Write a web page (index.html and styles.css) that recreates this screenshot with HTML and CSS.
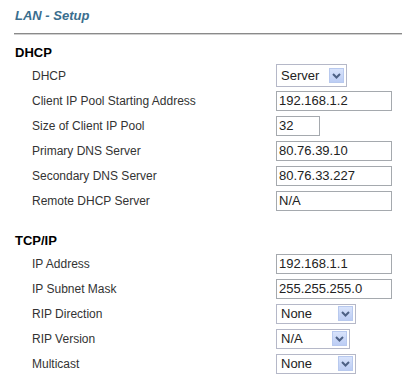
FILE: index.html
```html
<!DOCTYPE html>
<html>
<head>
<meta charset="utf-8">
<link rel="stylesheet" href="styles.css">
</head>
<body>
<div class="page">
  <h1 class="title">LAN - Setup</h1>
  <div class="rule"></div>

  <h2 class="section">DHCP</h2>
  <div class="form">
    <div class="label">DHCP</div>
    <div class="field"><div class="select sel-server"><span class="val">Server</span><span class="arrow"><svg width="9" height="6" viewBox="0 0 9 6"><path d="M1 1 L4.5 4.5 L8 1" fill="none" stroke="#4d6185" stroke-width="2"/></svg></span></div></div>

    <div class="label">Client IP Pool Starting Address</div>
    <div class="field"><div class="input">192.168.1.2</div></div>

    <div class="label">Size of Client IP Pool</div>
    <div class="field"><div class="input short">32</div></div>

    <div class="label">Primary DNS Server</div>
    <div class="field"><div class="input">80.76.39.10</div></div>

    <div class="label">Secondary DNS Server</div>
    <div class="field"><div class="input">80.76.33.227</div></div>

    <div class="label">Remote DHCP Server</div>
    <div class="field"><div class="input">N/A</div></div>
  </div>

  <h2 class="section tcp">TCP/IP</h2>
  <div class="form">
    <div class="label">IP Address</div>
    <div class="field"><div class="input">192.168.1.1</div></div>

    <div class="label">IP Subnet Mask</div>
    <div class="field"><div class="input">255.255.255.0</div></div>

    <div class="label">RIP Direction</div>
    <div class="field"><div class="select sel-wide"><span class="val">None</span><span class="arrow"><svg width="9" height="6" viewBox="0 0 9 6"><path d="M1 1 L4.5 4.5 L8 1" fill="none" stroke="#4d6185" stroke-width="2"/></svg></span></div></div>

    <div class="label">RIP Version</div>
    <div class="field"><div class="select sel-mid"><span class="val">N/A</span><span class="arrow"><svg width="9" height="6" viewBox="0 0 9 6"><path d="M1 1 L4.5 4.5 L8 1" fill="none" stroke="#4d6185" stroke-width="2"/></svg></span></div></div>

    <div class="label">Multicast</div>
    <div class="field"><div class="select sel-wide"><span class="val">None</span><span class="arrow"><svg width="9" height="6" viewBox="0 0 9 6"><path d="M1 1 L4.5 4.5 L8 1" fill="none" stroke="#4d6185" stroke-width="2"/></svg></span></div></div>
  </div>
</div>
</body>
</html>
```

FILE: styles.css
```css
html, body {
  margin: 0;
  padding: 0;
  background: #ffffff;
}

.page {
  padding: 8px 0 0 15px;
  font-family: "Liberation Sans", Arial, sans-serif;
}

.title {
  margin: 0;
  font-size: 13px;
  font-weight: bold;
  font-style: italic;
  color: #3a6e8e;
  line-height: 16px;
}

.rule {
  margin: 9px 0 0 -1px;
  height: 1px;
  border-top: 1px solid #8a8a8a;
  background: #d0d0d0;
}

.section {
  margin: 10px 0 0 0;
  font-size: 13px;
  font-weight: bold;
  color: #000000;
  line-height: 16px;
}

.section.tcp {
  margin-top: 20px;
}

.form {
  display: grid;
  grid-template-columns: 244px auto;
  grid-auto-rows: 25px;
  padding-left: 17px;
  margin-top: 2px;
}

.label {
  display: flex;
  align-items: center;
  font-size: 12px;
  color: #333333;
}

.field {
  display: flex;
  align-items: center;
}

.input {
  box-sizing: border-box;
  width: 116px;
  height: 20px;
  border: 1px solid #a5a9ae;
  padding: 0 2px;
  font-size: 13px;
  line-height: 18px;
  color: #222222;
}

.input.short {
  width: 44px;
}

.select {
  box-sizing: border-box;
  display: flex;
  align-items: center;
  justify-content: space-between;
  height: 20px;
  border: 1px solid #b5b8c8;
  padding: 0 2px 0 4px;
  font-size: 13px;
  color: #222222;
}

.sel-server {
  width: 71px;
  height: 23px;
}

.sel-wide {
  width: 80px;
}

.sel-mid {
  width: 74px;
}

.arrow {
  box-sizing: border-box;
  width: 15px;
  height: 15px;
  border: 1px solid #b8c9ee;
  background: linear-gradient(#d8e3fb, #bccdf4);
  display: flex;
  align-items: center;
  justify-content: center;
}

.arrow svg {
  display: block;
}
```
